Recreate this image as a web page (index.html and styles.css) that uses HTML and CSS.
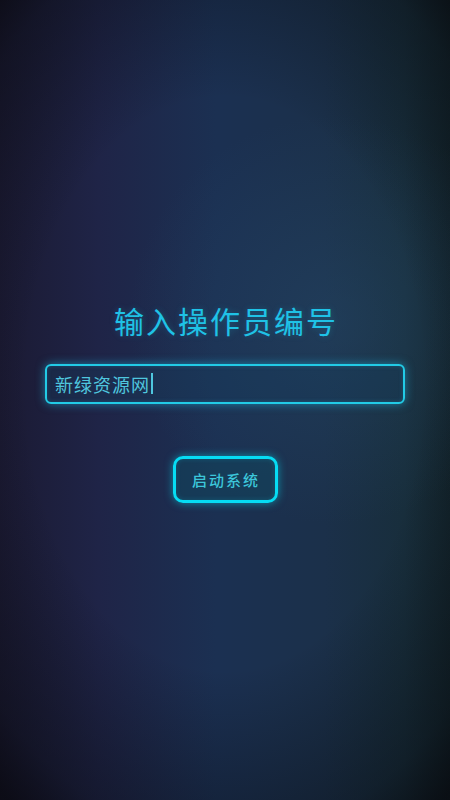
FILE: index.html
```html
<!DOCTYPE html>
<html lang="zh">
<head>
<meta charset="utf-8">
<title>输入操作员编号</title>
<link rel="stylesheet" href="styles.css">
</head>
<body>
<main class="screen">
  <h1 class="title">输入操作员编号</h1>
  <div class="field">
    <span class="value">新绿资源网</span><span class="caret"></span>
  </div>
  <button class="start" type="button">启动系统</button>
</main>
</body>
</html>
```

FILE: styles.css
```css
html, body {
  margin: 0;
  padding: 0;
  height: 100%;
}
body {
  font-family: "Noto Sans CJK SC", "Noto Sans", sans-serif;
  background:
    radial-gradient(ellipse 80% 65% at 50% 48%, rgba(0,0,0,0) 55%, rgba(6,8,12,0.4) 88%, rgba(6,6,10,0.7) 100%),
    radial-gradient(circle at 74% 40%, rgba(40,78,112,0.4) 0%, rgba(40,78,112,0) 35%),
    linear-gradient(90deg, #1b1a33 0%, #1f2447 22%, #1b3052 48%, #1b304a 72%, #182e3c 90%, #13242c 100%);
  overflow: hidden;
}
.screen {
  height: 800px;
  box-sizing: border-box;
  display: flex;
  flex-direction: column;
  align-items: center;
  justify-content: center;
  padding-top: 2px;
}
.title {
  margin: 0;
  font-size: 30px;
  line-height: 40px;
  font-weight: 400;
  letter-spacing: 2px;
  padding-left: 2px;
  color: #1fc2e6;
  text-shadow: 0 0 6px rgba(31,194,230,0.25);
}
.field {
  margin-top: 24px;
  width: 360px;
  height: 40px;
  box-sizing: border-box;
  border: 2px solid #22cbe6;
  border-radius: 6px;
  background: rgba(22,60,92,0.35);
  box-shadow: 0 0 10px rgba(30,190,230,0.55), inset 0 0 4px rgba(30,190,230,0.25);
  display: flex;
  align-items: center;
  padding-left: 8px;
}
.value {
  font-size: 18px;
  font-weight: 400;
  letter-spacing: 1px;
  color: #4fc6de;
}
.caret {
  width: 1.5px;
  height: 21px;
  background: #4fc6de;
  margin-left: 1px;
}
.start {
  margin-top: 52px;
  width: 105px;
  height: 47px;
  box-sizing: border-box;
  border: 3px solid #06dcf4;
  border-radius: 10px;
  background: rgba(18,70,92,0.55);
  box-shadow: 0 0 9px rgba(6,220,244,0.55), inset 0 0 5px rgba(6,220,244,0.2);
  font-family: "Noto Sans CJK SC", "Noto Sans", sans-serif;
  font-size: 15px;
  font-weight: 500;
  letter-spacing: 2px;
  padding: 0 0 0 2px;
  color: #3cc6da;
  cursor: pointer;
}
```
